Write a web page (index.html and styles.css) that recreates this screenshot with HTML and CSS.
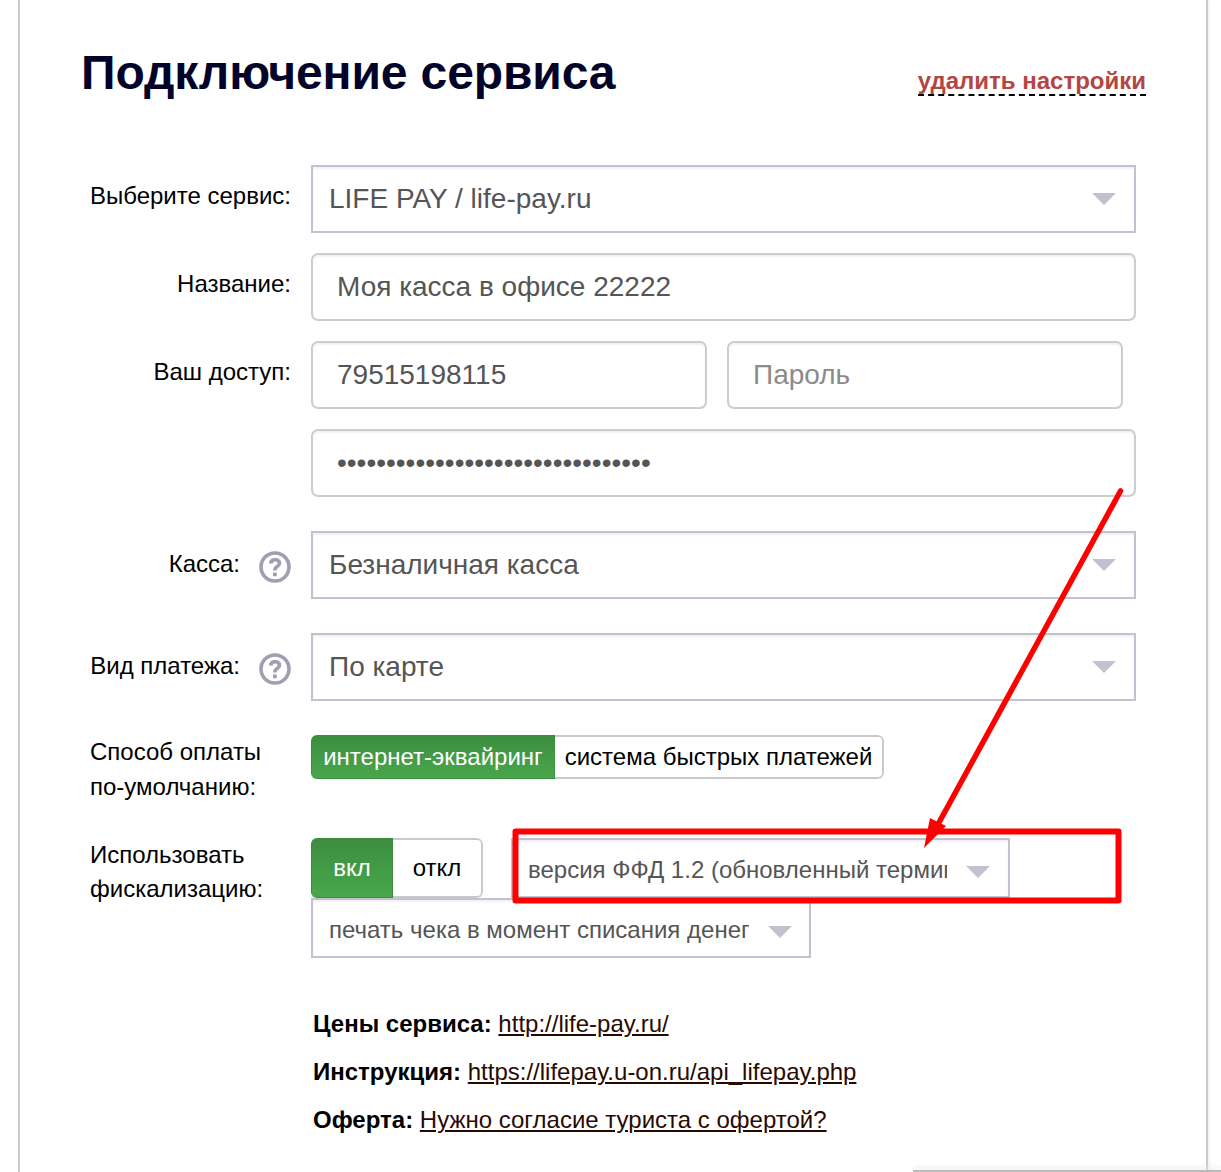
FILE: index.html
```html
<!DOCTYPE html>
<html lang="ru">
<head>
<meta charset="utf-8">
<title>Подключение сервиса</title>
<link rel="stylesheet" href="styles.css">
</head>
<body>
<main class="card">
  <header class="head">
    <h1 class="title">Подключение сервиса</h1>
    <a class="remove" href="#">удалить настройки</a>
  </header>
  <form class="form">
    <div class="row">
      <div class="label">Выберите сервис:</div>
      <div class="select select-big"><span class="select-text">LIFE PAY / life-pay.ru</span><i class="caret"></i></div>
    </div>
    <div class="row">
      <div class="label">Название:</div>
      <div class="input input-full">Моя касса в офисе 22222</div>
    </div>
    <div class="row row-access">
      <div class="label">Ваш доступ:</div>
      <div class="fields">
        <div class="input input-half">79515198115</div>
        <div class="input input-half input-placeholder">Пароль</div>
        <div class="input input-full input-dots">••••••••••••••••••••••••••••••••</div>
      </div>
    </div>
    <div class="row">
      <div class="label label-help">Касса:
        <svg class="help" viewBox="0 0 32 32"><circle cx="16" cy="16" r="14" fill="none" stroke="#a09fb1" stroke-width="3.6"/><path d="M9.8 12.3c.3-3.4 2.8-5.3 6.3-5.3 3.6 0 6.2 2 6.2 5.1 0 2.3-1.3 3.5-2.9 4.6-1.3.9-1.7 1.5-1.7 2.8h-3.6c0-2.6.8-3.7 2.5-5 1.2-.9 1.9-1.4 1.9-2.3 0-1-.9-1.7-2.3-1.7-1.4 0-2.4.8-2.6 2.2z M14 21.4h3.8v3.8H14z" fill="#a09fb1"/></svg>
      </div>
      <div class="select select-big"><span class="select-text">Безналичная касса</span><i class="caret"></i></div>
    </div>
    <div class="row">
      <div class="label label-help">Вид платежа:
        <svg class="help" viewBox="0 0 32 32"><circle cx="16" cy="16" r="14" fill="none" stroke="#a09fb1" stroke-width="3.6"/><path d="M9.8 12.3c.3-3.4 2.8-5.3 6.3-5.3 3.6 0 6.2 2 6.2 5.1 0 2.3-1.3 3.5-2.9 4.6-1.3.9-1.7 1.5-1.7 2.8h-3.6c0-2.6.8-3.7 2.5-5 1.2-.9 1.9-1.4 1.9-2.3 0-1-.9-1.7-2.3-1.7-1.4 0-2.4.8-2.6 2.2z M14 21.4h3.8v3.8H14z" fill="#a09fb1"/></svg>
      </div>
      <div class="select select-big"><span class="select-text">По карте</span><i class="caret"></i></div>
    </div>
    <div class="row">
      <div class="label label-left label-pay">Способ оплаты<br>по-умолчанию:</div>
      <div class="seg seg-pay">
        <span class="seg-item seg-on">интернет-эквайринг</span>
        <span class="seg-item">система быстрых платежей</span>
      </div>
    </div>
    <div class="row">
      <div class="label label-left label-fiscal">Использовать<br>фискализацию:</div>
      <div class="fiscal">
        <div class="seg seg-toggle">
          <span class="seg-item seg-on">вкл</span>
          <span class="seg-item">откл</span>
        </div>
        <div class="select select-small select-ffd"><span class="select-text">версия ФФД 1.2 (обновленный терминал)</span><i class="caret"></i></div>
        <div class="select select-small select-moment"><span class="select-text">печать чека в момент списания денег</span><i class="caret"></i></div>
      </div>
    </div>
  </form>
  <section class="links">
    <p class="link-line"><b>Цены сервиса:</b> <a href="#">http://life-pay.ru/</a></p>
    <p class="link-line"><b>Инструкция:</b> <a href="#">https://lifepay.u-on.ru/api_lifepay.php</a></p>
    <p class="link-line"><b>Оферта:</b> <a href="#">Нужно согласие туриста с офертой?</a></p>
  </section>
</main>
<div class="bottom-edge"></div>
<svg class="markup" viewBox="0 0 1221 1172" width="1221" height="1172">
  <rect x="515.5" y="831.5" width="603" height="69" fill="none" stroke="#ff0000" stroke-width="6" stroke-linejoin="round"/>
  <line x1="1120.5" y1="491" x2="936" y2="828" stroke="#ff0000" stroke-width="5.5" stroke-linecap="round"/>
  <polygon points="924,848 930,818 946,826" fill="#ff0000"/>
</svg>
</body>
</html>
```
FILE: styles.css
```css
* { box-sizing: border-box; }
html, body { margin: 0; padding: 0; height: 1172px; overflow: hidden; background: #fff; }
body { position: relative; font-family: "Liberation Sans", Arial, sans-serif; color: #000; }

.card {
  margin-left: 18px;
  width: 1190px;
  height: 1172px;
  border-left: 2px solid #c9c9c9;
  border-right: 2px solid #c9c9c9;
  box-shadow: 2px 0 2px #f3f3f3;
  padding-top: 45px;
}

.head { display: flex; align-items: flex-start; justify-content: space-between; padding: 0 60px 0 61px; height: 120px; }
.title { margin: 0; font-size: 48px; line-height: 56px; font-weight: 700; color: #03032a; letter-spacing: -0.12px; }
.remove {
  margin-top: 22px;
  font-size: 24px;
  line-height: 27px;
  font-weight: 700;
  color: #b44544;
  text-decoration: none;
  border-bottom: 2px dashed #000;
}

.form { display: flex; flex-direction: column; }
.row { display: grid; grid-template-columns: 271px 825px; column-gap: 20px; margin-bottom: 20px; }
.row:nth-child(3) { margin-bottom: 34px; }
.row:nth-child(4), .row:nth-child(5) { margin-bottom: 34px; }
.row:nth-child(6) { margin-bottom: 34px; }

.label { font-size: 24px; line-height: 34px; text-align: right; padding-top: 14px; }
.label-help { display: flex; justify-content: flex-end; align-items: flex-start; gap: 19px; padding-top: 16px; }
.label-left { text-align: left; padding: 0 0 0 70px; }
.label-pay { line-height: 35px; margin-top: -1px; }
.label-fiscal { padding-top: 0; }
.help { width: 32px; height: 32px; margin-top: 4px; flex: none; }

.select, .input {
  display: flex;
  align-items: center;
  background: #fff;
  color: #555;
  box-shadow: inset 0 2px 2px #f2f2f2;
}
.select { border: 2px solid #c1c1cf; position: relative; }
.select-big { height: 68px; width: 825px; font-size: 28px; padding: 0 18px 0 16px; }
.select-text { flex: 1; min-width: 0; overflow: hidden; white-space: nowrap; }
.caret { flex: none; width: 0; height: 0; border-left: 12px solid transparent; border-right: 12px solid transparent; border-top: 12px solid #c1c1cf; margin-left: 19px; }

.input { height: 68px; border: 2px solid #cdcdcd; border-radius: 7px; font-size: 28px; padding: 0 24px; }
.input-full { width: 825px; }
.input-half { width: 396px; }
.input-placeholder { color: #8b8b8b; }
.fields { display: flex; flex-wrap: wrap; gap: 20px; }

.seg { display: inline-flex; border-radius: 6px; overflow: hidden; background: #fff; }
.seg-item { display: flex; align-items: center; justify-content: center; border: 2px solid #c9c9c9; border-left: 0; border-radius: 0 6px 6px 0; }
.seg-on { color: #fff; background: linear-gradient(#3d8d40, #48a74b); border: 0; border-left: 1px solid #3d8d40; border-right: 1px solid #3d8d40; border-bottom: 1px solid #3d8d40; border-radius: 0; }
.seg-pay { height: 44px; width: 573px; font-size: 24px; }
.seg-pay .seg-item { flex: 1; white-space: nowrap; }
.seg-pay .seg-on { flex: none; width: 244px; }
.seg-toggle { height: 60px; width: 172px; font-size: 24px; flex: none; }
.seg-toggle .seg-item { flex: 1; }
.seg-toggle .seg-on { flex: none; width: 82px; }

.fiscal { display: flex; flex-wrap: wrap; align-items: flex-start; width: 825px; }
.select-small { height: 60px; font-size: 24px; padding-top: 4px; }
.select-small .caret { margin-top: 4px; }
.select-ffd { width: 499px; margin-left: 28px; padding-right: 18px; padding-left: 15px; }
.select-moment { width: 500px; padding-right: 17px; padding-left: 16px; }

.links { padding: 32px 0 0 293px; }
.link-line { margin: 0 0 21px; font-size: 24px; line-height: 27px; }
.link-line a { color: #2a0a00; text-decoration: underline; }

.bottom-edge { position: absolute; left: 913px; right: 0; top: 1170px; height: 2px; background: #b9b9b9; box-shadow: 0 -3px 4px #e6e6e6; }
.markup { position: absolute; left: 0; top: 0; pointer-events: none; }
```
